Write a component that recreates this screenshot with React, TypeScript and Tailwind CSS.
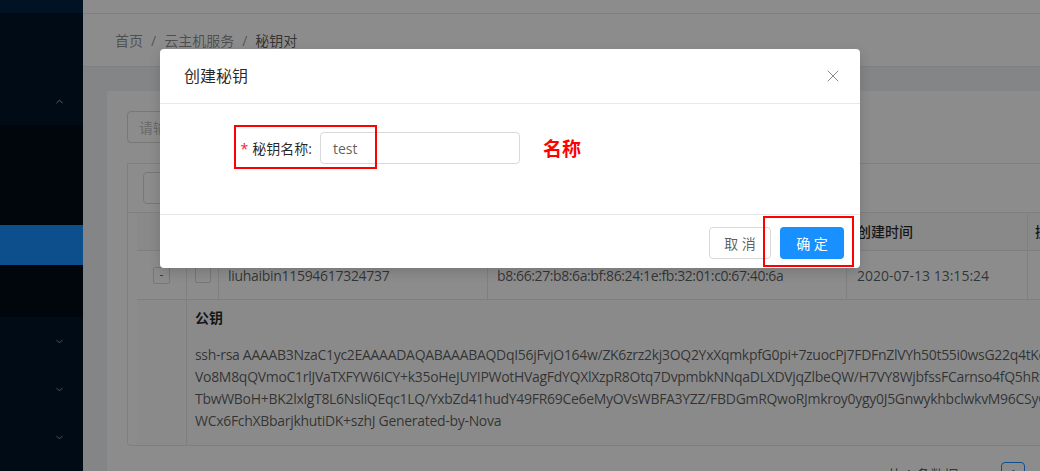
import React from "react";
import { X, ChevronUp, ChevronDown, Plus, ChevronLeft, ChevronRight } from "lucide-react";

const F = "font-['Open_Sans','Noto_Sans_CJK_SC',sans-serif]";

function Sidebar() {
  return (
    <div className="w-[83px] shrink-0 bg-[#001529] flex flex-col">
      <div className="h-[13px] bg-[#002140]" />
      <div className="h-[64px]" />
      <div className="h-[48px] flex items-center justify-end pr-[18px]">
        <ChevronUp size={11} strokeWidth={2} className="text-white/70" />
      </div>
      <div className="h-[100px] bg-[#000c17]" />
      <div className="h-[40px] bg-[#1890ff]" />
      <div className="h-[52px] bg-[#000c17]" />
      {[0, 1, 2].map((i) => (
        <div key={i} className="h-[48px] flex items-center justify-end pr-[18px]">
          <ChevronDown size={11} strokeWidth={2} className="text-white/60" />
        </div>
      ))}
    </div>
  );
}

const keyLines = [
  "ssh-rsa AAAAB3NzaC1yc2EAAAADAQABAAABAQDqI56jFvjO164w/ZK6zrz2kj3OQ2YxXqmkpfG0pi+7zuocPj7FDFnZlVYh50t55i0wsG22q4tKc8Lm2",
  "Vo8M8qQVmoC1rlJVaTXFYW6ICY+k35oHeJUYIPWotHVagFdYQXlXzpR8Otq7DvpmbkNNqaDLXDVjqZlbeQW/H7VY8WjbfssFCarnso4fQ5hRt7Lpm",
  "TbwWBoH+BK2lxlgT8L6NsliQEqc1LQ/YxbZd41hudY49FR69Ce6eMyOVsWBFA3YZZ/FBDGmRQwoRJmkroy0ygy0J5GnwykhbclwkvM96CSyQe3Lp",
  "WCx6FchXBbarjkhutiDK+szhJ Generated-by-Nova",
];

function Content() {
  return (
    <div className="flex-1 min-w-0 flex flex-col overflow-hidden">
      <div className="h-[14px] shrink-0 bg-white border-b border-[#e8e8e8]" />
      <div className="h-[53px] shrink-0 bg-white border-b border-[#e8e8e8] px-[32px] flex items-center text-[14px] text-black/45">
        <span>首页</span>
        <span className="mx-[8px]">/</span>
        <span>云主机服务</span>
        <span className="mx-[8px]">/</span>
        <span className="text-black/65">秘钥对</span>
      </div>
      <div className="flex-1 bg-[#f0f2f5] pl-[24px] pt-[24px]">
        <div className="w-[1200px] bg-white pl-[20px] pt-[20px] pb-[40px]">
          <div className="w-[250px] h-[32px] border border-[#d9d9d9] rounded-[4px] px-[11px] flex items-center text-[14px] text-[#bfbfbf]">
            请输入秘钥名称
          </div>
          <div className="w-[1100px] mt-[20px] h-[50px] border border-[#e8e8e8] px-[15px] flex items-center">
            <div className="h-[32px] border border-[#d9d9d9] rounded-[4px] px-[15px] flex items-center gap-[8px] text-[14px] text-black/65">
              <Plus size={14} strokeWidth={1.5} />
              <span>创建秘钥</span>
            </div>
          </div>
          <div className="w-[1100px] border border-t-0 border-[#e8e8e8] rounded-b-[4px] pl-[9px] text-[14px] text-black/65">
            <div className="h-[38px] flex bg-[#fafafa] border-b border-[#e8e8e8] text-black/85 font-medium">
              <div className="w-[50px] border-r border-[#e8e8e8]" />
              <div className="w-[32px] border-r border-[#e8e8e8] flex items-center justify-center">
                <div className="w-[16px] h-[16px] border border-[#d9d9d9] rounded-[2px] bg-white" />
              </div>
              <div className="w-[269px] border-r border-[#e8e8e8] px-[10px] flex items-center">名称</div>
              <div className="w-[359px] border-r border-[#e8e8e8] px-[9px] flex items-center">指纹</div>
              <div className="w-[181px] border-r border-[#e8e8e8] px-[10px] flex items-center">创建时间</div>
              <div className="w-[120px] px-[7px] flex items-center">操作</div>
            </div>
            <div className="h-[49px] flex border-b border-[#e8e8e8]">
              <div className="w-[50px] border-r border-[#e8e8e8] flex items-center justify-center">
                <div className="w-[17px] h-[17px] border border-[#d9d9d9] rounded-[2px] bg-white flex items-center justify-center text-[12px] leading-none">-</div>
              </div>
              <div className="w-[32px] border-r border-[#e8e8e8] flex items-center justify-center">
                <div className="w-[16px] h-[16px] border border-[#d9d9d9] rounded-[2px] bg-white" />
              </div>
              <div className="w-[269px] border-r border-[#e8e8e8] px-[9px] flex items-center tracking-[-0.3px]">liuhaibin11594617324737</div>
              <div className="w-[359px] border-r border-[#e8e8e8] px-[9px] flex items-center tracking-[-0.4px]">b8:66:27:b8:6a:bf:86:24:1e:fb:32:01:c0:67:40:6a</div>
              <div className="w-[181px] border-r border-[#e8e8e8] px-[10px] flex items-center">2020-07-13 13:15:24</div>
              <div className="w-[120px] px-[7px] flex items-center" />
            </div>
            <div className="h-[145px] flex bg-[#fbfbfb]">
              <div className="w-[50px] border-r border-[#e8e8e8]" />
              <div className="flex-1 pl-[8px] pt-[7px]">
                <div className="font-bold text-black/85 leading-[22px]">公钥</div>
                <div className="mt-[15px] leading-[22px] tracking-[-0.3px]">
                  {keyLines.map((l, i) => (
                    <div key={i} className="whitespace-nowrap">{l}</div>
                  ))}
                </div>
              </div>
            </div>
          </div>
          <div className="mt-[16px] flex items-center ml-[760px] text-[14px] text-black/65">
            <span>共 1 条数据</span>
            <div className="ml-[12px] w-[24px] h-[24px] flex items-center justify-center text-black/25">
              <ChevronLeft size={12} />
            </div>
            <div className="ml-[7px] w-[24px] h-[24px] border border-[#1890ff] rounded-[4px] flex items-center justify-center text-[#1890ff]">1</div>
            <div className="ml-[8px] w-[24px] h-[24px] flex items-center justify-center text-black/25">
              <ChevronRight size={12} />
            </div>
          </div>
        </div>
      </div>
    </div>
  );
}

function Modal() {
  return (
    <div className="absolute left-[160px] top-[49px] w-[700px] bg-white rounded-[4px] shadow-[0_4px_12px_rgba(0,0,0,0.15)] text-[14px]">
      <div className="h-[55px] px-[24px] border-b border-[#e8e8e8] flex items-center justify-between">
        <span className="text-[16px] text-black/85">创建秘钥</span>
        <X size={20} strokeWidth={1.2} className="text-black/45 mr-[-7px]" />
      </div>
      <div className="pt-[28px] pb-[50px] flex items-center">
        <div className="w-[160px] text-right pr-[8px] text-black/85 whitespace-nowrap">
          <span className="text-[#f5222d] mr-[4px]">*</span>
          秘钥名称:
        </div>
        <div className="w-[200px] h-[32px] border border-[#d9d9d9] rounded-[4px] px-[12px] flex items-center text-black/65">test</div>
        <span className="ml-[23px] text-[19px] font-bold text-[#ff0000] font-['Noto_Sans_CJK_SC',serif]">名称</span>
      </div>
      <div className="border-t border-[#e8e8e8] pt-[12px] pb-[9px] pr-[16px] flex justify-end gap-[9px]">
        <div className="h-[32px] w-[62px] border border-[#d9d9d9] rounded-[4px] flex items-center justify-center text-black/65">取 消</div>
        <div className="h-[32px] w-[64px] bg-[#1890ff] rounded-[4px] flex items-center justify-center text-white">确 定</div>
      </div>
      <div className="absolute left-[74px] top-[76px] w-[143px] h-[44px] border-2 border-[#ff0000]" />
      <div className="absolute left-[603px] top-[167px] w-[91px] h-[51px] border-2 border-[#ff0000]" />
    </div>
  );
}

export default function App() {
  return (
    <div className={`relative w-[1040px] h-[471px] overflow-hidden flex ${F}`}>
      <Sidebar />
      <Content />
      <div className="absolute inset-0 bg-black/45" />
      <Modal />
    </div>
  );
}
